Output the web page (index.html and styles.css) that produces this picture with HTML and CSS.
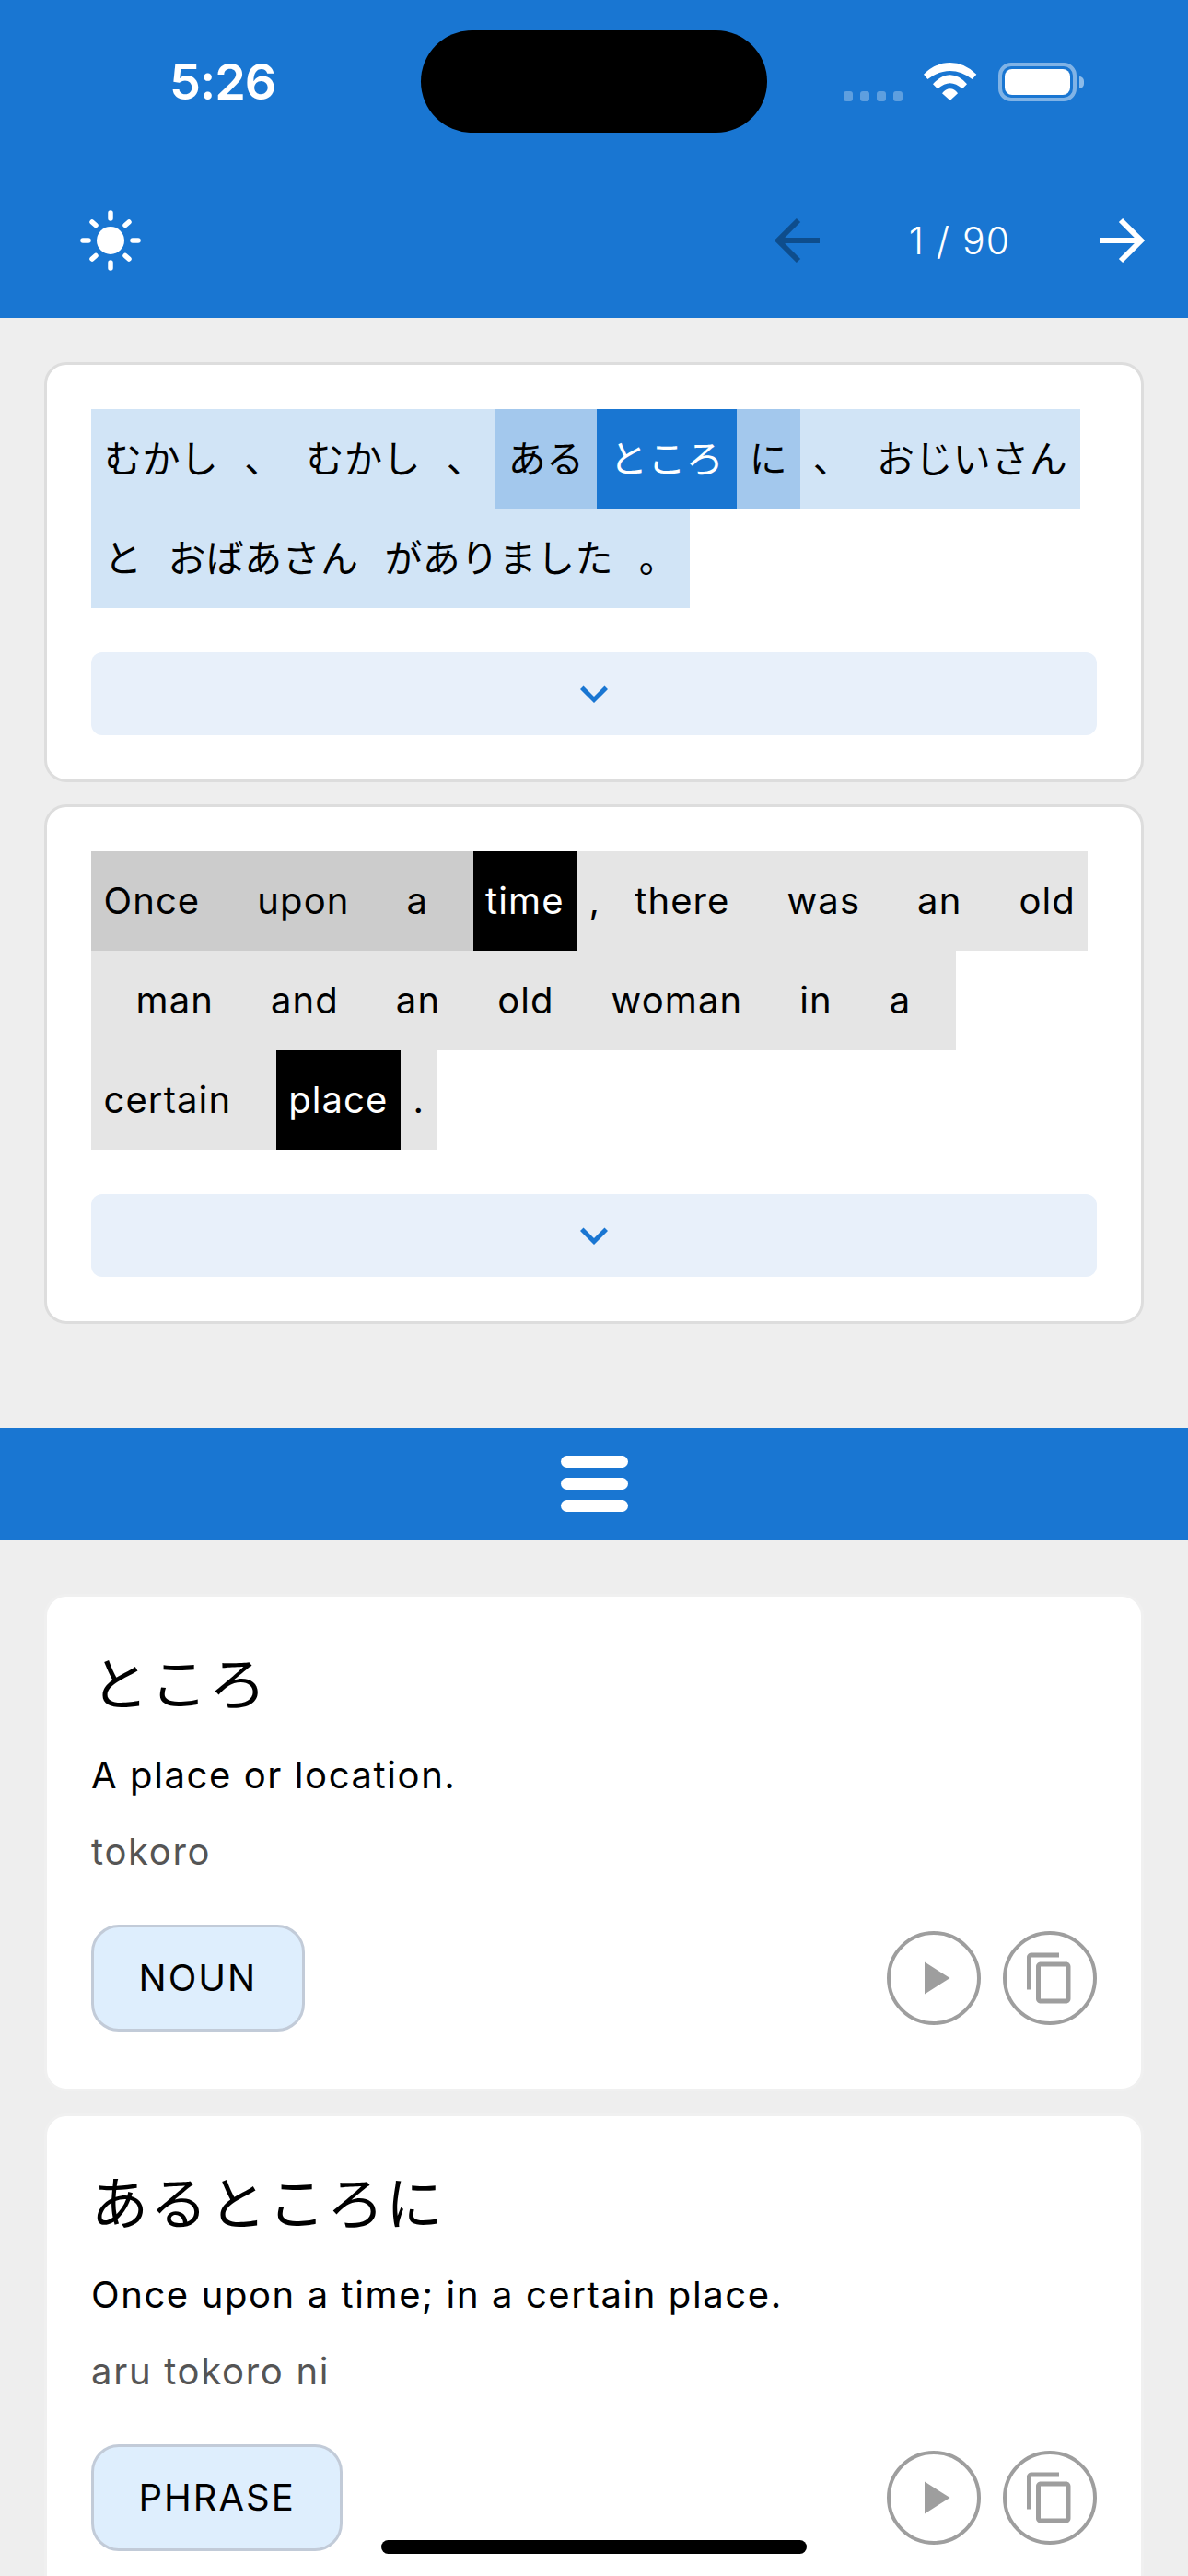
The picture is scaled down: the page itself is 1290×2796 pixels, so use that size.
FILE: index.html
```html
<!DOCTYPE html>
<html lang="ja">
<head>
    <meta charset="UTF-8">
    <meta name="viewport" content="width=device-width, initial-scale=1.0">
    <title>Reader</title>
    <link rel="stylesheet" href="styles.css">
</head>
<body>
    <div class="screen">
        <header class="header">
            <div class="status-bar">
                <span class="time">5:26</span>
                <div class="status-icons">
                    <div class="signal"><i></i><i></i><i></i><i></i></div>
                    <svg class="wifi" width="58" height="42" viewBox="0 0 58 42" fill="#fff">
                        <path d="M0 12.7Q13 0 28.7 0T57.3 12.7L52.7 18Q41 9 28.7 9T4.3 18Z"/>
                        <path d="M10 23.3Q19 13.3 28.7 13.3T47 23.3L42 28.3Q35 22.3 28.7 22.3T15 28.3Z"/>
                        <path d="M20 33.3Q24 28.3 28.7 28.3T37 33.3L28.7 41Z"/>
                    </svg>
                    <div class="battery"><div class="battery-fill"></div></div>
                    <div class="battery-cap"></div>
                </div>
            </div>
            <div class="island"></div>
            <div class="toolbar">
                <svg class="sun" width="68" height="68" viewBox="0 0 68 68" fill="none" stroke="#fff" stroke-width="5.5" stroke-linecap="round">
                    <circle cx="34" cy="34" r="15" fill="#fff" stroke="none"/>
                    <path d="M34 4V10M34 58V64M4 34H10M58 34H64M14 14L18 17.5M54 14L50 17.5M14 54L18 50.5M54 54L50 50.5"/>
                </svg>
                <div class="pager">
                    <svg class="arrow arrow-off" width="52" height="52" viewBox="0 0 52 52" fill="none" stroke="currentColor" stroke-width="6">
                        <path d="M50 26H6M27 4L5 26L27 48"/>
                    </svg>
                    <span class="page-count">1 / 90</span>
                    <svg class="arrow" width="52" height="52" viewBox="0 0 52 52" fill="none" stroke="currentColor" stroke-width="6">
                        <path d="M2 26H46M25 4L47 26L25 48"/>
                    </svg>
                </div>
            </div>
        </header>

        <main class="reader">
            <section class="card">
                <div class="sentence">
                    <span class="tok tok-jp jp">むかし</span>
                    <span class="tok tok-jp jp tight">、</span>
                    <span class="tok tok-jp jp">むかし</span>
                    <span class="tok tok-jp jp tight">、</span>
                    <span class="tok tok-jp jp-phrase">ある</span>
                    <span class="tok tok-jp jp-word">ところ</span>
                    <span class="tok tok-jp jp-phrase">に</span>
                    <span class="tok tok-jp jp">、</span>
                    <span class="tok tok-jp jp">おじいさん</span>
                    <span class="tok tok-jp jp">と</span>
                    <span class="tok tok-jp jp">おばあさん</span>
                    <span class="tok tok-jp jp">がありました</span>
                    <span class="tok tok-jp jp">。</span>
                </div>
                <button class="expand">
                    <svg width="60" height="60" viewBox="0 0 24 24" fill="#1976d2"><path d="M16.59 8.59 12 13.17 7.41 8.59 6 10l6 6 6-6z"/></svg>
                </button>
            </section>

            <section class="card">
                <div class="sentence">
                    <span class="tok en-phrase">Once</span>
                    <span class="gap en-phrase"></span>
                    <span class="tok en-phrase">upon</span>
                    <span class="gap en-phrase"></span>
                    <span class="tok en-phrase">a</span>
                    <span class="gap en-phrase"></span>
                    <span class="tok en-word">time</span>
                    <span class="tok en">,</span>
                    <span class="gap-narrow en"></span>
                    <span class="tok en">there</span>
                    <span class="gap en"></span>
                    <span class="tok en">was</span>
                    <span class="gap en"></span>
                    <span class="tok en">an</span>
                    <span class="gap en"></span>
                    <span class="tok en">old</span>
                    <span class="gap en"></span>
                    <span class="tok en">man</span>
                    <span class="gap en"></span>
                    <span class="tok en">and</span>
                    <span class="gap en"></span>
                    <span class="tok en">an</span>
                    <span class="gap en"></span>
                    <span class="tok en">old</span>
                    <span class="gap en"></span>
                    <span class="tok en">woman</span>
                    <span class="gap en"></span>
                    <span class="tok en">in</span>
                    <span class="gap en"></span>
                    <span class="tok en">a</span>
                    <span class="gap en"></span>
                    <span class="tok en">certain</span>
                    <span class="gap en"></span>
                    <span class="tok en-word">place</span>
                    <span class="tok en">.</span>
                </div>
                <button class="expand">
                    <svg width="60" height="60" viewBox="0 0 24 24" fill="#1976d2"><path d="M16.59 8.59 12 13.17 7.41 8.59 6 10l6 6 6-6z"/></svg>
                </button>
            </section>
        </main>

        <div class="drawer-bar">
            <span></span><span></span><span></span>
        </div>

        <div class="words">
            <article class="word-card">
                <h2 class="word-title">ところ</h2>
                <p class="word-desc">A place or location.</p>
                <p class="word-read">tokoro</p>
                <div class="word-foot">
                    <span class="badge">NOUN</span>
                    <div class="word-actions">
                        <button class="round-btn">
                            <svg width="60" height="60" viewBox="0 0 24 24" fill="#9e9e9e"><path d="M8 5v14l11-7z"/></svg>
                        </button>
                        <button class="round-btn">
                            <svg width="60" height="60" viewBox="0 0 24 24" fill="#9e9e9e"><path d="M16 1H4c-1.1 0-2 .9-2 2v14h2V3h12V1zm3 4H8c-1.1 0-2 .9-2 2v14c0 1.1.9 2 2 2h11c1.100 0 2-.9 2-2V7c0-1.100-.9-2-2-2zm0 16H8V7h11v14z"/></svg>
                        </button>
                    </div>
                </div>
            </article>

            <article class="word-card">
                <h2 class="word-title">あるところに</h2>
                <p class="word-desc">Once upon a time; in a certain place.</p>
                <p class="word-read">aru tokoro ni</p>
                <div class="word-foot">
                    <span class="badge">PHRASE</span>
                    <div class="word-actions">
                        <button class="round-btn">
                            <svg width="60" height="60" viewBox="0 0 24 24" fill="#9e9e9e"><path d="M8 5v14l11-7z"/></svg>
                        </button>
                        <button class="round-btn">
                            <svg width="60" height="60" viewBox="0 0 24 24" fill="#9e9e9e"><path d="M16 1H4c-1.1 0-2 .9-2 2v14h2V3h12V1zm3 4H8c-1.1 0-2 .9-2 2v14c0 1.1.9 2 2 2h11c1.100 0 2-.9 2-2V7c0-1.100-.9-2-2-2zm0 16H8V7h11v14z"/></svg>
                        </button>
                    </div>
                </div>
            </article>
        </div>

        <div class="home-indicator"></div>
    </div>
</body>
</html>
```

FILE: styles.css
```css
* {
    box-sizing: border-box;
}
body {
    margin: 0;
    font-family: Inter, "Noto Sans CJK JP", sans-serif;
    color: #000;
    background: #eeeeee;
}
.screen {
    position: relative;
    height: 2796px;
    overflow: hidden;
    background: #eeeeee;
}
.header {
    height: 345px;
    background: #1976d2;
    color: #fff;
}
.status-bar {
    height: 177px;
    padding: 0 113px 0 184px;
    display: flex;
    justify-content: space-between;
    align-items: center;
}
.time {
    font-size: 54px;
    font-weight: 600;
    letter-spacing: -1px;
}
.status-icons {
    display: flex;
    align-items: flex-end;
    height: 42px;
}
.signal {
    display: flex;
    gap: 8px;
    margin-right: 23px;
}
.signal i {
    width: 10px;
    height: 11px;
    border-radius: 3px;
    background: rgba(255, 255, 255, 0.3);
}
.wifi {
    margin-right: 23px;
}
.battery {
    width: 85px;
    height: 42px;
    padding: 3px;
    border: 4px solid rgba(255, 255, 255, 0.45);
    border-radius: 14px;
}
.battery-fill {
    height: 100%;
    background: #fff;
    border-radius: 8px;
}
.battery-cap {
    width: 5px;
    height: 13px;
    margin: 0 0 14px 3px;
    background: rgba(255, 255, 255, 0.5);
    border-radius: 0 6px 6px 0;
}
.island {
    position: absolute;
    top: 33px;
    left: 457px;
    width: 376px;
    height: 111px;
    background: #000;
    border-radius: 56px;
}
.toolbar {
    height: 168px;
    padding: 0 46px 0 86px;
    display: flex;
    justify-content: space-between;
    align-items: center;
}
.pager {
    display: flex;
    align-items: center;
}
.arrow {
    display: block;
}
.arrow-off {
    color: #0e4d8c;
}
.page-count {
    width: 300px;
    text-align: center;
    font-size: 41px;
    font-weight: 300;
    letter-spacing: 1.2px;
}
.reader {
    padding: 48px 48px 0;
    display: flex;
    flex-direction: column;
    gap: 24px;
}
.card {
    padding: 48px;
    background: #fff;
    border: 3px solid #dddddd;
    border-radius: 24px;
}
.sentence {
    display: flex;
    flex-wrap: wrap;
    margin-bottom: 48px;
}
.tok {
    height: 108px;
    line-height: 108px;
    padding: 0 13.5px;
    font-size: 40px;
    letter-spacing: 1.1px;
    white-space: nowrap;
}
.tok-jp {
    padding: 0 14px;
    font-size: 41px;
    letter-spacing: 0.4px;
}
.tight {
    padding-right: 12px;
}
.gap {
    width: 35px;
    height: 108px;
}
.gap-narrow {
    width: 10px;
    height: 108px;
}
.jp {
    background: #d1e4f6;
}
.jp-phrase {
    padding: 0 13.5px;
    background: #a3c8ed;
}
.jp-word {
    background: #1976d2;
    color: #fff;
}
.en {
    background: #e5e5e5;
}
.en-phrase {
    background: #cccccc;
}
.en-word {
    background: #000;
    color: #fff;
}
.expand {
    display: flex;
    justify-content: center;
    align-items: center;
    width: 100%;
    height: 90px;
    padding: 0;
    border: none;
    border-radius: 12px;
    background: #e8f0fa;
}
.drawer-bar {
    height: 121px;
    margin-top: 113px;
    background: #1976d2;
    display: flex;
    flex-direction: column;
    justify-content: center;
    align-items: center;
    gap: 11px;
}
.drawer-bar span {
    width: 73px;
    height: 13px;
    background: #fff;
    border-radius: 7px;
}
.words {
    padding: 59px 48px 0;
    display: flex;
    flex-direction: column;
    gap: 24px;
}
.word-card {
    padding: 48px 48px 62px;
    background: #fff;
    border: 3px solid #f0f0f0;
    border-radius: 24px;
}
.word-title {
    margin: 0 0 20px;
    font-size: 62px;
    font-weight: 400;
    line-height: 96px;
    letter-spacing: 2px;
}
.word-desc {
    margin: 0 0 23px;
    font-size: 40px;
    line-height: 60px;
    letter-spacing: 1.6px;
}
.word-read {
    margin: 0 0 49px;
    font-size: 40px;
    line-height: 60px;
    letter-spacing: 1.7px;
    color: #555555;
}
.word-foot {
    display: flex;
    justify-content: space-between;
    align-items: center;
}
.badge {
    height: 116px;
    line-height: 110px;
    padding: 0 48.5px;
    font-size: 40px;
    letter-spacing: 2px;
    background: #deeefd;
    border: 3px solid #c2cbd8;
    border-radius: 30px;
}
.word-actions {
    display: flex;
    gap: 24px;
}
.round-btn {
    display: flex;
    justify-content: center;
    align-items: center;
    width: 102px;
    height: 102px;
    padding: 0;
    background: #fff;
    border: 4px solid #9e9e9e;
    border-radius: 50%;
}
.home-indicator {
    position: absolute;
    left: 414px;
    bottom: 24px;
    width: 462px;
    height: 15px;
    background: #000;
    border-radius: 8px;
}
```
